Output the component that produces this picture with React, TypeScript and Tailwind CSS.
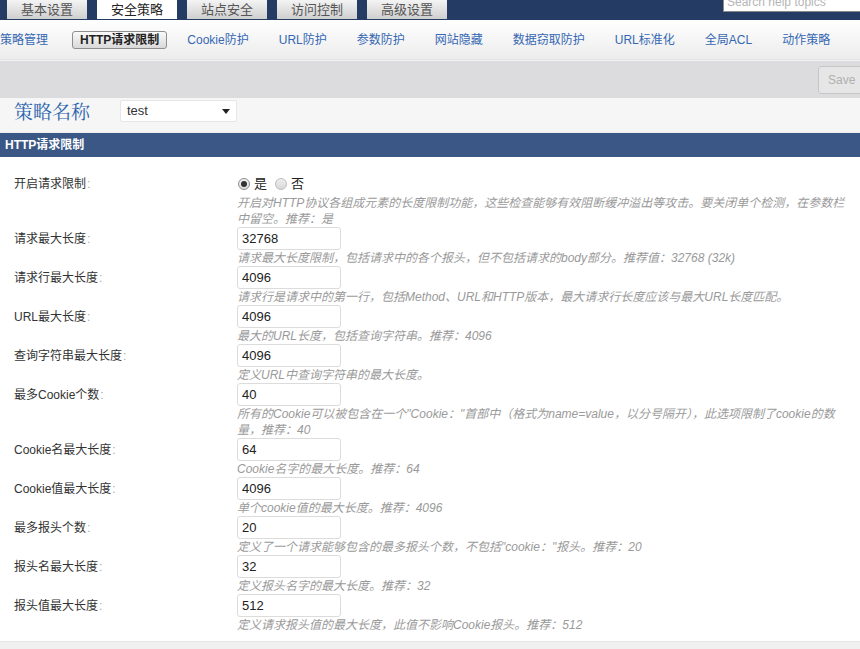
import React from "react";

const tabs = ["基本设置", "安全策略", "站点安全", "访问控制", "高级设置"];
const subnav = ["Cookie防护", "URL防护", "参数防护", "网站隐藏", "数据窃取防护", "URL标准化", "全局ACL", "动作策略"];

type Row = { label: string; value: string; desc: React.ReactNode };

const rows: Row[] = [
  { label: "请求最大长度", value: "32768", desc: "请求最大长度限制，包括请求中的各个报头，但不包括请求的body部分。推荐值：32768 (32k)" },
  { label: "请求行最大长度", value: "4096", desc: "请求行是请求中的第一行，包括Method、URL和HTTP版本，最大请求行长度应该与最大URL长度匹配。" },
  { label: "URL最大长度", value: "4096", desc: "最大的URL长度，包括查询字符串。推荐：4096" },
  { label: "查询字符串最大长度", value: "4096", desc: "定义URL中查询字符串的最大长度。" },
  {
    label: "最多Cookie个数",
    value: "40",
    desc: (
      <>
        所有的Cookie可以被包含在一个"Cookie："首部中（格式为name=value，以分号隔开），此选项限制了cookie的数
        <br />
        量，推荐：40
      </>
    ),
  },
  { label: "Cookie名最大长度", value: "64", desc: "Cookie名字的最大长度。推荐：64" },
  { label: "Cookie值最大长度", value: "4096", desc: "单个cookie值的最大长度。推荐：4096" },
  { label: "最多报头个数", value: "20", desc: "定义了一个请求能够包含的最多报头个数，不包括\"cookie：\"报头。推荐：20" },
  { label: "报头名最大长度", value: "32", desc: "定义报头名字的最大长度。推荐：32" },
  { label: "报头值最大长度", value: "512", desc: "定义请求报头值的最大长度，此值不影响Cookie报头。推荐：512" },
];

function Label({ text }: { text: string }) {
  return (
    <div className="w-[237px] shrink-0 pl-[14px] h-[23px] flex items-center text-[12px] text-[#333]">
      {text}
      <span className="text-[#aaa] ml-[1px]">:</span>
    </div>
  );
}

function Desc({ children }: { children: React.ReactNode }) {
  return <div className="text-[12px] italic text-[#9a9a9a] leading-[16px] whitespace-nowrap">{children}</div>;
}

export default function App() {
  return (
    <div className="w-[860px] h-[649px] overflow-hidden bg-white font-['Liberation_Sans','Noto_Sans_CJK_SC',sans-serif] text-[12px] text-[#333]">
      {/* top bar */}
      <div className="h-[20px] bg-[#243c63] flex items-start">
        <div className="flex gap-[10px] pl-[7px]">
          {tabs.map((t, i) => (
            <div
              key={t}
              className={
                i === 1
                  ? "w-[80px] h-[19px] flex items-center justify-center bg-white text-[13px] text-[#222]"
                  : "w-[80px] h-[19px] flex items-center justify-center bg-gradient-to-b from-[#f4f4f4] to-[#cfcfcf] text-[13px] text-[#555]"
              }
            >
              {t}
            </div>
          ))}
        </div>
        <div className="ml-auto w-[137px] h-[20px] -mt-[8px] bg-white border border-[#8a8a8a] border-r-0 px-[3px] flex items-center text-[12px] text-[#b5b5b5] overflow-hidden whitespace-nowrap">
          Search help topics
        </div>
      </div>

      {/* sub nav */}
      <div className="h-[40px] bg-gradient-to-b from-white to-[#ececec] border-b border-[#e2e2e2] flex items-center gap-[30px] whitespace-nowrap text-[12px] text-[#3567b3]">
        <span>策略管理</span>
        <span className="-ml-[6px] -mr-[10px] h-[18px] px-[7px] flex items-center border border-[#8f8f8f] rounded-[3px] bg-gradient-to-b from-[#fafafa] to-[#d9d9d9] font-bold text-[#222]">
          HTTP请求限制
        </span>
        {subnav.map((s) => (
          <span key={s}>{s}</span>
        ))}
      </div>

      {/* gray toolbar */}
      <div className="h-[38px] bg-[#dcdbde] border-t border-[#f2f2f2] flex justify-end items-start pt-[5px] overflow-hidden">
        <div className="w-[50px] h-[28px] -mr-[8px] border border-[#c6c6c6] rounded-[3px] bg-[#e6e6e6] flex items-center pl-[9px] text-[12px] text-[#b0b0b0]">
          Save
        </div>
      </div>

      {/* policy name */}
      <div className="h-[35px] bg-[#f6f6f6] border-b border-[#ececec] pl-[14px] pt-[2px]">
        <div className="flex items-center h-[22px]">
          <div className="w-[106px] text-[19px] leading-[22px] text-[#2c63ad] font-['Noto_Serif_CJK_SC','Liberation_Serif','Noto_Sans_CJK_SC',serif]">
            策略名称
          </div>
          <div className="w-[117px] h-[22px] bg-white border border-[#e6e6e6] rounded-[2px] flex items-center justify-between pl-[6px] pr-[6px] text-[13px] text-[#333]">
            <span>test</span>
            <svg width="8" height="5" viewBox="0 0 8 5">
              <path d="M0 0 L8 0 L4 5 Z" fill="#222" />
            </svg>
          </div>
        </div>
      </div>

      {/* section header */}
      <div className="h-[24px] bg-[#3a5785] flex items-center pl-[5px] text-[12px] font-bold text-white">HTTP请求限制</div>

      {/* form */}
      <div className="pt-[15px] pb-[8px] border-b border-[#e6e6e6]">
        <div className="flex">
          <Label text="开启请求限制" />
          <div className="flex flex-col">
            <div className="h-[23px] flex items-center gap-[4px] text-[13px] text-[#222]">
              <span className="ml-[1px] w-[12px] h-[12px] rounded-full border border-[#8d8d8d] bg-gradient-to-b from-[#f3f3f3] to-[#dcdcdc] flex items-center justify-center">
                <span className="w-[6px] h-[6px] rounded-full bg-[#333]" />
              </span>
              <span>是</span>
              <span className="ml-[4px] w-[12px] h-[12px] rounded-full border border-[#bdbdbd] bg-gradient-to-b from-[#eee] to-[#d8d8d8]" />
              <span>否</span>
            </div>
            <Desc>
              开启对HTTP协议各组成元素的长度限制功能，这些检查能够有效阻断缓冲溢出等攻击。要关闭单个检测，在参数栏
              <br />
              中留空。推荐：是
            </Desc>
          </div>
        </div>
        {rows.map((r) => (
          <div key={r.label} className="flex">
            <Label text={r.label} />
            <div className="flex flex-col">
              <div className="w-[104px] h-[23px] border border-[#dcdcdc] rounded-[3px] bg-white px-[4px] flex items-center text-[13px] text-[#222]">
                {r.value}
              </div>
              <Desc>{r.desc}</Desc>
            </div>
          </div>
        ))}
      </div>
      <div className="h-[20px] bg-[#f0f0f0]" />
    </div>
  );
}
